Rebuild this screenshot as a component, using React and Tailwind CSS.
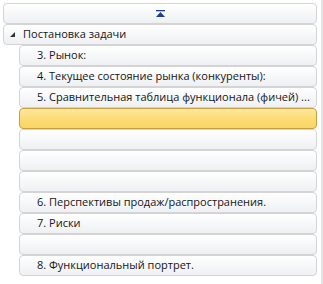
import React from "react";

const rowBase =
  "h-[21px] w-full min-w-0 flex items-center rounded-[4px] border border-[#d4d4d4] bg-gradient-to-b from-[#ffffff] to-[#eef0f3] text-[11px] text-[#161616] whitespace-nowrap overflow-hidden";

function Row({ text, selected }) {
  if (selected) {
    return (
      <div className="h-[21px] w-full rounded-[4px] border border-[#c9a040] bg-gradient-to-b from-[#fde7a0] via-[#fcdc74] to-[#f9d566]" />
    );
  }
  return (
    <div className={rowBase}>
      <span className="pl-[17px]">{text}</span>
    </div>
  );
}

export default function App() {
  const children = [
    "3. Рынок:",
    "4. Текущее состояние рынка (конкуренты):",
    "5. Сравнительная таблица функционала (фичей)  ...",
    null,
    "",
    "",
    "",
    "6. Перспективы продаж/распространения.",
    "7. Риски",
    "",
    "8. Функциональный портрет.",
  ];
  return (
    <div
      className="w-[323px] h-[284px] bg-white flex overflow-hidden"
      style={{ fontFamily: '"Open Sans", "Noto Sans", sans-serif' }}
    >
      <div className="flex-1 min-w-0 pl-[3px] pr-[4px] pt-[3px] flex flex-col">
        <div className={rowBase + " justify-center"}>
          <svg width="9" height="7" viewBox="0 0 9 7">
            <rect x="0" y="0" width="9" height="1.3" fill="#1d3f91" />
            <path d="M4.5 2 L9 7 L0 7 Z" fill="#1d3f91" />
          </svg>
        </div>
        <div className={rowBase}>
          <span className="pl-[6px] pr-[8px] flex items-center">
            <svg width="5" height="5" viewBox="0 0 5 5">
              <path d="M5 0 L5 5 L0 5 Z" fill="#333" />
            </svg>
          </span>
          <span>Постановка задачи</span>
        </div>
        <div className="pl-[16px] flex flex-col min-w-0">
          {children.map((t, i) => (
            <Row key={i} text={t} selected={t === null} />
          ))}
        </div>
      </div>
      <div className="w-[2px] bg-[#e4e4e4]" />
    </div>
  );
}
